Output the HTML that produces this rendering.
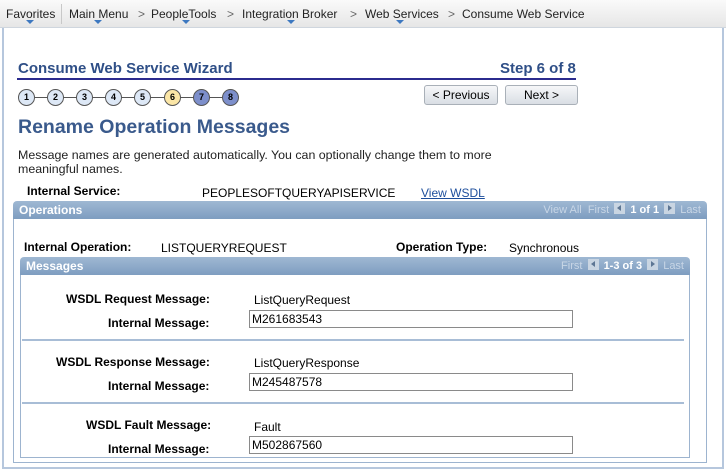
<!DOCTYPE html>
<html><head><style>
*{margin:0;padding:0;box-sizing:border-box}
body{width:726px;height:472px;background:#fff;font-family:"Liberation Sans",Arial,sans-serif;font-size:12px;color:#000;position:relative;overflow:hidden}
.a{position:absolute;white-space:nowrap}
.nav{position:absolute;left:0;top:0;width:726px;height:28px;background:linear-gradient(#fafafa,#e6e6e6);border-bottom:1px solid #cfd6de}
.nav span{position:absolute;top:7px;font-size:12px;color:#222}
.tri{position:absolute;top:20px;width:0;height:0;border-left:4px solid transparent;border-right:4px solid transparent;border-top:4px solid #3d78c0}
.frame{position:absolute;left:2px;top:28px;width:722px;height:441px;border:2px solid #b6c7dd;border-top:none}
.c{position:absolute;top:89px;width:17px;height:17px;border-radius:50%;border:1px solid #555;background:#dde8f6;font-size:9px;font-weight:bold;text-align:center;line-height:15px}
.ln{position:absolute;top:97px;height:1px;background:#555}
.btn{position:absolute;top:85px;height:20px;border:1px solid #a9b0b8;border-radius:3px;background:linear-gradient(#f6f7f9,#d9dee4);text-align:center;line-height:18px;font-size:12px}
.hdr{position:absolute;height:18px;background:linear-gradient(#9fb8d3,#7e9dc0);border-radius:4px 4px 0 0;color:#fff;font-weight:bold;font-size:12px;line-height:18px}
.hdr .r{position:absolute;right:6px;top:0;font-weight:normal;font-size:11px;color:#c8d6e6}
.hdr .r b{color:#fff}
.ar{display:inline-block;width:11px;height:11px;background:#c9d5e2;vertical-align:-1px;position:relative;margin:0 2px}
.ar i{position:absolute;top:2px;left:3px;width:0;height:0;border-top:3.5px solid transparent;border-bottom:3.5px solid transparent}
.l i{border-right:4px solid #5d7694}
.rr i{border-left:4px solid #5d7694;left:4px}
.box{position:absolute;border:1px solid #9db4cf;border-top:none}
.lb{position:absolute;font-weight:bold;text-align:right;white-space:nowrap}
.inp{position:absolute;height:18px;border:1px solid #8a8a8a;background:#fff;padding-left:2px;line-height:16px;font-size:12px}
.sep{position:absolute;left:22px;width:662px;height:2px;background:#a8bdd6}
</style></head><body>
<div class="nav">
<span style="left:6px">Favorites</span><div class="tri" style="left:26px"></div>
<div style="position:absolute;left:61px;top:4px;width:1px;height:20px;background:#c8c8c8"></div>
<span style="left:69px">Main Menu</span><div class="tri" style="left:94px"></div>
<span style="left:138px;color:#666">&gt;</span>
<span style="left:151px">PeopleTools</span><div class="tri" style="left:182px"></div>
<span style="left:227px;color:#666">&gt;</span>
<span style="left:242px">Integration Broker</span><div class="tri" style="left:287px"></div>
<span style="left:350px;color:#666">&gt;</span>
<span style="left:365px">Web Services</span><div class="tri" style="left:396px"></div>
<span style="left:448px;color:#666">&gt;</span>
<span style="left:462px">Consume Web Service</span>
</div>
<div class="frame"></div>
<div class="a" style="left:18px;top:60px;font-size:15px;font-weight:bold;color:#2f4f87">Consume Web Service Wizard</div>
<div class="a" style="left:500px;top:60px;font-size:15px;font-weight:bold;color:#2f4f87">Step 6 of 8</div>
<div style="position:absolute;left:17px;top:78px;width:559px;height:2px;background:#2b2b8e"></div>
<div class="ln" style="left:30px;width:200px"></div>
<div class="c" style="left:18px">1</div><div class="c" style="left:47px">2</div><div class="c" style="left:76px">3</div><div class="c" style="left:105px">4</div><div class="c" style="left:134px">5</div>
<div class="c" style="left:164px;background:#fbe6a6">6</div>
<div class="c" style="left:193px;background:#7d8fcb">7</div>
<div class="c" style="left:222px;background:#7d8fcb">8</div>
<div class="btn" style="left:424px;width:74px">&lt; Previous</div>
<div class="btn" style="left:505px;width:73px">Next &gt;</div>
<div class="a" style="left:18px;top:116px;font-size:19.5px;font-weight:bold;color:#3a5a8c">Rename Operation Messages</div>
<div class="a" style="left:18px;top:148px;color:#222;font-size:12.4px">Message names are generated automatically. You can optionally change them to more</div>
<div class="a" style="left:18px;top:162px;color:#222;font-size:12.4px">meaningful names.</div>
<div class="lb" style="left:27px;top:184px">Internal Service:</div>
<div class="a" style="left:202px;top:186px">PEOPLESOFTQUERYAPISERVICE</div>
<div class="a" style="left:421px;top:186px;color:#1d4e9c;text-decoration:underline">View WSDL</div>
<div class="hdr" style="left:13px;top:201px;width:694px;padding-left:6px">Operations<div class="r">View All &nbsp;First <span class="ar l"><i></i></span> <b>1 of 1</b> <span class="ar rr"><i></i></span> Last</div></div>
<div class="box" style="left:13px;top:219px;width:694px;height:244px"></div>
<div class="lb" style="left:24px;top:240px">Internal Operation:</div>
<div class="a" style="left:161px;top:241px">LISTQUERYREQUEST</div>
<div class="lb" style="left:396px;top:240px">Operation Type:</div>
<div class="a" style="left:509px;top:241px">Synchronous</div>
<div class="hdr" style="left:20px;top:257px;width:670px;padding-left:6px">Messages<div class="r">First <span class="ar l"><i></i></span> <b>1-3 of 3</b> <span class="ar rr"><i></i></span> Last</div></div>
<div class="box" style="left:20px;top:275px;width:670px;height:183px"></div>
<div class="lb" style="left:66px;top:292px">WSDL Request Message:</div>
<div class="a" style="left:254px;top:293px">ListQueryRequest</div>
<div class="lb" style="left:108px;top:316px">Internal Message:</div>
<div class="inp" style="left:249px;top:310px;width:324px">M261683543</div>
<div class="sep" style="top:339px"></div>
<div class="lb" style="left:56px;top:355px">WSDL Response Message:</div>
<div class="a" style="left:254px;top:356px">ListQueryResponse</div>
<div class="lb" style="left:108px;top:379px">Internal Message:</div>
<div class="inp" style="left:249px;top:373px;width:324px">M245487578</div>
<div class="sep" style="top:402px"></div>
<div class="lb" style="left:86px;top:418px">WSDL Fault Message:</div>
<div class="a" style="left:254px;top:420px">Fault</div>
<div class="lb" style="left:108px;top:442px">Internal Message:</div>
<div class="inp" style="left:249px;top:436px;width:324px">M502867560</div>
</body></html>
